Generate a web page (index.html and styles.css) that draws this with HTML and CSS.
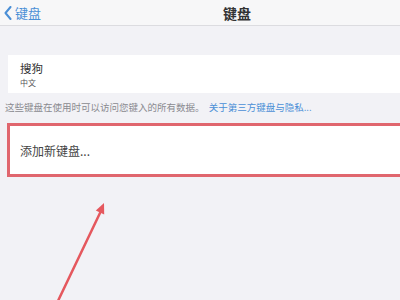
FILE: index.html
```html
<!DOCTYPE html>
<html lang="zh-CN">
<head>
<meta charset="UTF-8">
<meta name="viewport" content="width=device-width, initial-scale=1.0">
<title>键盘</title>
<link rel="stylesheet" href="styles.css">
</head>
<body>
<div class="nav">
    <a class="back" href="#">
        <svg class="chevron" width="8" height="14" viewBox="0 0 8 14">
            <path d="M6.5 1 L1.5 7 L6.5 13" fill="none" stroke="#4a8fd6" stroke-width="2" stroke-linecap="round" stroke-linejoin="round"/>
        </svg>
        <span>键盘</span>
    </a>
    <div class="title">键盘</div>
</div>

<div class="content">
    <div class="card">
        <div class="kb-name">搜狗</div>
        <div class="kb-lang">中文</div>
    </div>
    <div class="note">这些键盘在使用时可以访问您键入的所有数据。 <a href="#">关于第三方键盘与隐私...</a></div>
    <div class="add-row">添加新键盘...</div>
</div>

<!-- annotation arrow -->
<svg class="arrow" width="400" height="300" viewBox="0 0 400 300">
    <line x1="57" y1="303" x2="100" y2="213" stroke="#e5585e" stroke-width="2.5" stroke-linecap="round"/>
    <polygon points="104,203 104.2,214.5 95.8,210.5" fill="#e5585e"/>
</svg>
</body>
</html>
```

FILE: styles.css
```css
body {
    margin: 0;
    background-color: #f2f2f6;
    font-family: "Noto Sans CJK SC", "Noto Sans", sans-serif;
    width: 400px;
    height: 300px;
    overflow: hidden;
    position: relative;
}
.nav {
    height: 26px;
    background-color: #f7f7f8;
    border-bottom: 1px solid #dcdce0;
    display: flex;
    align-items: center;
    padding-left: 4px;
    box-sizing: border-box;
}
.back {
    display: flex;
    align-items: center;
    gap: 3px;
    color: #4a8fd6;
    text-decoration: none;
    font-size: 13px;
}
.title {
    margin-left: 182px;
    font-size: 14px;
    font-weight: bold;
    color: #333;
}
.content {
    padding-top: 29px;
}
.card {
    margin-left: 8px;
    background-color: #fff;
    padding: 5px 12px 4px;
    height: 38px;
    box-sizing: border-box;
}
.kb-name {
    font-size: 11.5px;
    line-height: 17px;
    color: #333;
}
.kb-lang {
    font-size: 8px;
    line-height: 11px;
    color: #555;
}
.note {
    margin-top: 8px;
    padding-left: 5px;
    font-size: 9.5px;
    line-height: 12px;
    color: #8a8a90;
    white-space: nowrap;
}
.note a {
    color: #4a8fd6;
    text-decoration: none;
    margin-left: 2px;
}
.add-row {
    margin-top: 10px;
    margin-left: 7px;
    margin-right: -10px;
    height: 54px;
    box-sizing: border-box;
    border: 3px solid #e0666e;
    background-color: #fff;
    padding-left: 10px;
    display: flex;
    align-items: center;
    font-size: 12px;
    color: #444;
}
.arrow {
    position: absolute;
    left: 0;
    top: 0;
    pointer-events: none;
}
```
